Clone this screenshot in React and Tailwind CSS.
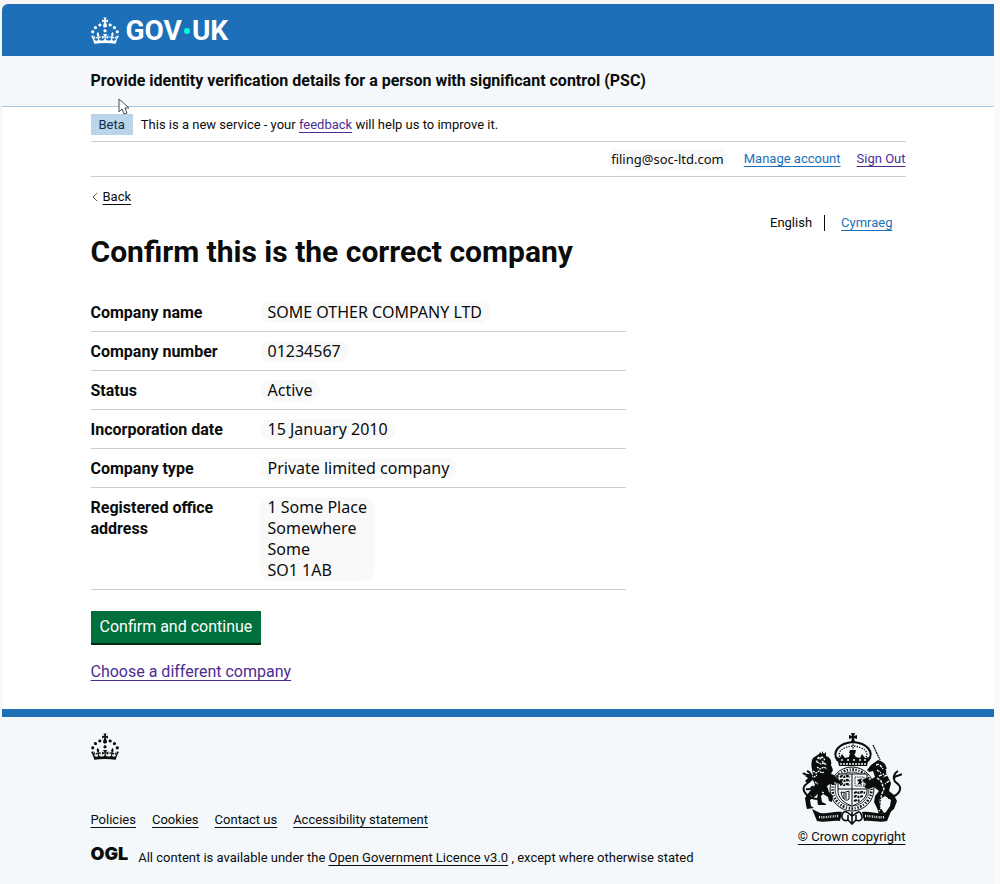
import { ChevronLeft } from 'lucide-react';

const company = [
    { label: 'Company name', value: ['SOME OTHER COMPANY LTD'] },
    { label: 'Company number', value: ['01234567'] },
    { label: 'Status', value: ['Active'] },
    { label: 'Incorporation date', value: ['15 January 2010'] },
    { label: 'Company type', value: ['Private limited company'] },
    { label: 'Registered office address', value: ['1 Some Place', 'Somewhere', 'Some', 'SO1 1AB'] },
];

const footerLinks = ['Policies', 'Cookies', 'Contact us', 'Accessibility statement'];

const link = 'underline decoration-1 underline-offset-3';

function Crown() {
    return (
        <svg viewBox="0 0 32 30" className="h-[27px] w-7 shrink-0" aria-hidden="true">
            <path
                fill="currentColor"
                fillRule="evenodd"
                d="M22.6 10.4c-1 .4-2-.1-2.4-1-.4-.9.1-2 1-2.4.9-.4 2 .1 2.4 1s-.1 2-1 2.4m-5.9 6.7c-.9.4-2-.1-2.4-1-.4-.9.1-2 1-2.4.9-.4 2 .1 2.4 1s-.1 2-1 2.4m10.8-3.7c-1 .4-2-.1-2.4-1-.4-.9.1-2 1-2.4.9-.4 2 .1 2.4 1s0 2-1 2.4m3.3 4.8c-1 .4-2-.1-2.4-1-.4-.9.1-2 1-2.4.9-.4 2 .1 2.4 1s-.1 2-1 2.4M17 4.7l2.3 1.2V2.5l-2.3.7-.2-.2.9-3h-3.4l.9 3-.2.2c-.1.1-2.3-.7-2.3-.7v3.4L15 4.7c.1.1.1.2.2.2l-1.3 4c-.1.2-.1.4-.1.6 0 1.1.8 2 1.9 2.2h.7c1-.2 1.9-1.1 1.9-2.1 0-.2 0-.4-.1-.6l-1.3-4c-.1-.2 0-.2.1-.3m-7.6 5.7c.9.4 2-.1 2.4-1 .4-.9-.1-2-1-2.4-.9-.4-2 .1-2.4 1s0 2 1 2.4m-5 3c.9.4 2-.1 2.4-1 .4-.9-.1-2-1-2.4-.9-.4-2 .1-2.4 1s.1 2 1 2.4m-3.2 4.8c.9.4 2-.1 2.4-1 .4-.9-.1-2-1-2.4-.9-.4-2 .1-2.4 1s0 2 1 2.4m14.8 11c4.4 0 8.6.3 12.3.8 1.1-4.5 2.4-7 3.7-8.8l-2.5-.9c.2 1.3.3 1.9 0 2.7-.4-.4-.8-1.1-1.1-2.3l-1.2 4c.7-.5 1.3-.8 2-.9-1.1 2.5-2.6 3.1-3.5 3-1.1-.2-1.7-1.2-1.5-2.1.3-1.2 1.5-1.5 2.1-.1 1.1-2.3-.8-3-2-2.3 1.9-1.9 2.1-3.5.6-5.6-2.1 1.6-2.1 3.2-1.2 5.5-1.2-1.4-3.2-.6-2.5 1.6.9-1.4 2.1-.5 1.9.8-.2 1.1-1.7 2.1-3.5 1.9-2.7-.2-2.9-2.1-2.9-3.6.7-.1 1.9.5 2.9 1.9l.4-4.3c-1.1 1.1-2.1 1.4-3.2 1.4.4-1.2 2.1-3 2.1-3h-5.4s1.7 1.9 2.1 3c-1.1 0-2.1-.2-3.2-1.4l.4 4.3c1-1.4 2.2-2 2.9-1.9-.1 1.5-.2 3.4-2.9 3.6-1.9.2-3.4-.8-3.5-1.9-.2-1.3 1-2.2 1.9-.8.7-2.3-1.2-3-2.5-1.6.9-2.2.9-3.9-1.2-5.5-1.5 2-1.3 3.7.6 5.6-1.2-.7-3.1 0-2 2.3.6-1.4 1.8-1.1 2.1.1.2.9-.3 1.9-1.5 2.1-.9.2-2.4-.5-3.5-3 .6 0 1.2.3 2 .9l-1.2-4c-.3 1.1-.7 1.9-1.1 2.3-.3-.8-.2-1.4 0-2.7l-2.9.9C1.3 23 2.6 25.5 3.7 30c3.7-.5 7.9-.8 12.3-.8"
            />
        </svg>
    );
}

function RoyalArms() {
    return (
        <svg viewBox="0 0 100 92" className="h-[92px] w-[100px]" fill="none" stroke="#0b0c0c" aria-hidden="true">
            {/* Crown */}
            <path d="M49 0h4l-1 3 3-1v4l-3-1 1 4h-4l1-4-3 1V2l3 1z" fill="#0b0c0c" stroke="none" />
            <path d="M36 28C29 19 37 10 51 9c14 1 22 10 15 19" strokeWidth="2.2" />
            <path d="M39 26C34 19 40 14 51 13c11 1 17 6 12 13M51 9v16" strokeWidth="1.4" strokeDasharray="1.3 1.3" />
            <path d="M35 24l3 1 2-4 3 4 4-1 1-4h-1l1-3h6l-1 4h-1l2 3 4 1 2-4 3 4 4-1-2 9H37z" fill="#0b0c0c" stroke="none" />
            <path d="M39 27h3m3 0h3m3 0h3m3 0h3m2 0h2M38 31h26" stroke="#f4f8fb" strokeWidth="1.4" strokeDasharray="2 1" />
            {/* Garter and shield */}
            <ellipse cx="50" cy="56" rx="22" ry="22" strokeWidth="1" fill="#f4f8fb" />
            <ellipse cx="50" cy="56" rx="19.5" ry="19.5" strokeWidth="2.6" strokeDasharray="1 1.6 1.8 1.4 1.3 1.8" />
            <ellipse cx="50" cy="56" rx="17" ry="17" strokeWidth="0.8" />
            <path d="M36 41h29v17c0 7-7 12-15 15-8-3-14-8-14-15z" fill="#f4f8fb" strokeWidth="1" />
            <path d="M50 41v31M36 56h29" strokeWidth="1" />
            <path d="M38 44l2-1 2 1 3-1 3 1M38 48l2-1 3 1 2-1 3 1M38 52l2-1 2 1 3-1 3 1" strokeWidth="2.2" strokeDasharray="3 .8 2 .7" />
            <path d="M53 44h9v9h-9z" strokeWidth="1" strokeDasharray="1 .8" />
            <path d="M55 52l2-3-2-2 3-1 2-1-1 3 2 1-2 1 1 2-3-1z" fill="#0b0c0c" stroke="none" />
            <path d="M39 59c3 1 5 0 8-1v8c-3 3-7 0-8-7zM42 60v6m2-6v6" strokeWidth="1" />
            <path d="M52 60l3-1 2 1 3-1 3 1M52 64l2-1 3 1 4-1M52 68l3-1 3 1" strokeWidth="2.2" strokeDasharray="3 .8 2 .7" />
            {/* Lion */}
            <path d="M17 21l1-2 2 2v-3l2 3 2-2v4c4 1 6 5 5 9l2 5-2 4 3 1 5 5 4 2-3 2-6-2 1 3-5-1-3 2 2 6 4 4-1 6-3-1-1-4-5-3-2 2 1 6 4 2v1h-8l-1-7 1-4-5 4-3 2 1 6 3 2-7 1-1-4-1-7 5-7 5-6-2-5-6 3-2-2 3-3-3-2 4-2 4 1c-1-7-3-11 0-17z" fill="#0b0c0c" stroke="none" />
            <path d="M15 25l3 1 2-2 3 3m-8 2l4 2 3-1 3 2m-10 2l3 2 4-2 3 2m-9-12l2 1 3-1m-7 5l2-2m4 1l3 3m-12 7l3 2 3-2 3 2 2-1m-13 4l3 1 3-2m-2 7l3 2m-8 12l2 1m10-5l2 1" stroke="#f4f8fb" strokeWidth="1.3" strokeDasharray="2 .8" />
            <path d="M15 66c-9-1-15-7-13-12 1-4 7-4 7-9 0-4-5-2-8-5m8 6c1-4-1-7-4-8M4 56c4 1 6-1 7-3" strokeWidth="2" />
            {/* Unicorn */}
            <path d="M71 12l7 15" strokeWidth="1.3" strokeDasharray="2 .6" />
            <path d="M76 27l3 1 4 3 2 5-1 4 2 4 3 6-2 8 5 4 3 6-3 8-5 4-3-1 4-6 1-6-6-4-6 4 1 7 4 6-5 1-2-6-3-6 1-6 4-5-5-4-6 2-4-2 2-3-4-4 4-2 4 2 5-3-2-6-4 1-2-2 4-5z" fill="#0b0c0c" stroke="none" />
            <path d="M74 32l3-1m1 1l3 4m-6 1l4 3m-2 3l5-2m-7 4l4 3 3 8-3 7 2 9-4 6m8-36l-4 2m6 4l-4 3m1-15l2 3" stroke="#f4f8fb" strokeWidth="1.4" strokeDasharray="3 1" />
            <path d="M76 49c2 10 3 17 1 28" strokeWidth="1.5" strokeDasharray="2 1" />
            <path d="M86 65c8-1 13-6 12-11-1-4-6-4-6-8 0-5 5-2 8-5m-8 5c-1-4 1-6 4-8" strokeWidth="2" />
            {/* Motto */}
            <path d="M10 76l8 4c8 1 14-2 22-1l-2 9c-8-1-16 2-23 0zM90 76l-8 4c-8 1-14-2-22-1l2 9c8-1 16 2 23 0z" fill="#0b0c0c" stroke="none" />
            <path d="M17 84c7 1 13-1 20-1M63 83c7 0 13 2 20 1" stroke="#f4f8fb" strokeWidth="2.4" strokeDasharray="1 1 .6 1" />
            <path d="M41 80c3-4 7 2 9 3 3-1 7-7 9-2 3 5-1 8-5 6l-4 4-4-4c-4 2-8-2-5-7zM46 82v6m8-6v6M50 79v11" strokeWidth="1.6" />
        </svg>
    );
}

function Pointer() {
    return (
        <svg viewBox="0 0 12 17" className="absolute left-[118px] top-[98px] h-[17px] w-3" aria-hidden="true">
            <path d="M1 1v13l3-3 2 5 3-1-2-5h4z" fill="#fff" stroke="#444b55" strokeWidth="1" />
        </svg>
    );
}

export default function App() {
    return (
        <div className="relative flex min-h-screen flex-col bg-[#f7f7f7] pl-0.5 pt-1 font-['Roboto',sans-serif] text-[13px] leading-5 text-[#0b0c0c]">
            <div className="flex flex-1 border-r-6 border-[#fbfbfb]">
                <div className="flex flex-1 flex-col rounded-tl-md bg-white">
                    <header>
                        <div className="rounded-tl-md bg-[#1d70b8] px-6 text-white">
                            <div className="mx-auto flex h-13 max-w-[815px] items-center gap-[7px]">
                                <Crown />
                                <a href="#" aria-label="GOV.UK" className="flex items-center gap-0.5 pt-0.5 text-[28px] font-bold leading-8">
                                    <span>GOV</span>
                                    <span className="size-1.5 rounded-full bg-[#00ffe0]"></span>
                                    <span>UK</span>
                                </a>
                            </div>
                        </div>
                        <div className="border-b border-[#a5c6e3] bg-[#f4f8fb] px-6">
                            <div className="mx-auto flex h-[50px] max-w-[815px] items-center">
                                <a href="#" className="text-base font-bold">
                                    Provide identity verification details for a person with significant control (PSC)
                                </a>
                            </div>
                        </div>
                    </header>

                    <div className="px-6">
                        <div className="mx-auto max-w-[815px]">
                            <div className="flex items-center gap-2 border-b border-[#cecece] pb-1.5 pt-[7px]">
                                <strong className="bg-[#bbd4ea] px-2 font-normal leading-[21px] text-[#0c2d4a]">Beta</strong>
                                <span>
                                    This is a new service - your <a href="#" className={`${link} text-[#4c2c92]`}>feedback</a> will help us to improve it.
                                </span>
                            </div>
                            <div className="flex h-[35px] items-center justify-end gap-4 border-b border-[#cecece]">
                                <span className="rounded-full bg-[#f9f9f9] px-1 font-['Noto_Sans',sans-serif]">filing@soc-ltd.com</span>
                                <a href="#" className={`${link} text-[#1d70b8]`}>Manage account</a>
                                <a href="#" className={`${link} text-[#4c2c92]`}>Sign Out</a>
                            </div>
                            <a href="#" className="mt-2.5 inline-flex items-center">
                                <ChevronLeft size={16} strokeWidth={1} className="-ml-1 text-[#0b0c0c]" />
                                <span className={link}>Back</span>
                            </a>

                            <main>
                                <nav aria-label="Language" className="mt-1 flex justify-end pr-[13px]">
                                    <span className="mr-4 border-r border-[#0b0c0c] pr-3 leading-4">English</span>
                                    <a href="#" className={`${link} leading-4 text-[#1d70b8]`}>Cymraeg</a>
                                </nav>
                                <h1 className="mt-[5px] text-[30px] font-bold leading-8">Confirm this is the correct company</h1>

                                <dl className="mt-[25px] max-w-[535px] text-base leading-[21px]">
                                    {company.map(({ label, value }) => (
                                        <div key={label} className="flex border-b border-[#cecece] pb-2 pt-[9px]">
                                            <dt className="w-[169px] shrink-0 pr-5 font-bold">{label}</dt>
                                            <dd>
                                                <div className="rounded-xl bg-[#f9f9f9] px-2 font-['Noto_Sans',sans-serif]">
                                                    {value.map((line) => (
                                                        <div key={line}>{line}</div>
                                                    ))}
                                                </div>
                                            </dd>
                                        </div>
                                    ))}
                                </dl>

                                <button type="button" className="mt-[21px] block border-b-2 border-[#002d18] bg-[#00703c] px-[9px] text-base leading-8 text-white">
                                    Confirm and continue
                                </button>
                                <a href="#" className={`${link} mt-[17px] inline-block text-base leading-5 text-[#4c2c92]`}>Choose a different company</a>
                            </main>
                        </div>
                    </div>

                    <footer className="mt-[26px] flex-1 border-t-8 border-[#1d70b8] bg-[#f4f8fb] px-6 pt-4">
                        <div className="mx-auto flex max-w-[815px] items-start justify-between">
                            <div>
                                <Crown />
                                <ul className="mt-[50px] flex gap-4">
                                    {footerLinks.map((text) => (
                                        <li key={text}><a href="#" className={link}>{text}</a></li>
                                    ))}
                                </ul>
                                <div className="mt-3 flex gap-2.5">
                                    <span className="font-['Inter',sans-serif] text-lg font-black leading-6">OGL</span>
                                    <p className="pt-1.5">
                                        All content is available under the <a href="#" className={link}>Open Government Licence v3.0</a> , except where otherwise stated
                                    </p>
                                </div>
                            </div>
                            <a href="#" className="flex flex-col items-center gap-0.5">
                                <RoyalArms />
                                <span className={link}>© Crown copyright</span>
                            </a>
                        </div>
                    </footer>
                </div>
            </div>
            <Pointer />
        </div>
    );
}
